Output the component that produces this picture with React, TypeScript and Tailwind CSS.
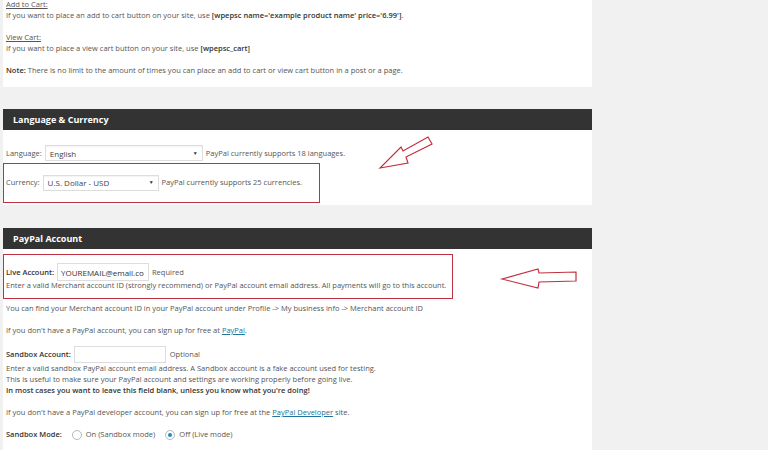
import React from "react";

const font = { fontFamily: '"Open Sans", "Noto Sans", sans-serif' };

function Header({ title }: { title: string }) {
  return (
    <div className="h-[21px] bg-[#333333] flex items-center pl-[10px]">
      <span className="text-white font-bold text-[9px]">{title}</span>
    </div>
  );
}

function Select({ value, width }: { value: string; width: string }) {
  return (
    <div
      className={`${width} h-[16px] border border-[#dddddd] bg-white flex items-center justify-between px-[4px] shadow-[inset_0_1px_1px_rgba(0,0,0,0.05)]`}
    >
      <span className="text-[8px] text-[#444]">{value}</span>
      <span className="text-[5px] text-[#333]">▼</span>
    </div>
  );
}

function Radio({ checked }: { checked?: boolean }) {
  return (
    <span className="w-[10px] h-[10px] rounded-full border border-[#b4b9be] bg-white flex items-center justify-center">
      {checked ? <span className="w-[4px] h-[4px] rounded-full bg-[#1e8cbe]" /> : null}
    </span>
  );
}

function ArrowOne() {
  return (
    <svg className="absolute left-[370px] top-[130px]" width="70" height="45" viewBox="370 130 70 45">
      <polygon
        points="380,168 408,163 406,157 432,144 428,137 403,151 401,147"
        fill="white"
        stroke="#c0303f"
        strokeWidth="1.2"
      />
    </svg>
  );
}

function ArrowTwo() {
  return (
    <svg className="absolute left-[495px] top-[262px]" width="90" height="32" viewBox="495 262 90 32">
      <polygon
        points="502,279 538,269 539,273 576,272 576,281 539,282 538,288"
        fill="white"
        stroke="#c0303f"
        strokeWidth="1.2"
      />
    </svg>
  );
}

export default function App() {
  return (
    <div
      className="relative w-[768px] h-[450px] overflow-hidden bg-[#f1f1f1] text-[7.5px] leading-[11px] text-[#555]"
      style={font}
    >
      <div className="ml-[3px] w-[589px] flex flex-col">
        {/* shortcode panel */}
        <div className="bg-white h-[87px] pl-[3px]">
          <div className="-mt-[1px]">
            <div className="underline">Add to Cart:</div>
            <div>
              If you want to place an add to cart button on your site, use{" "}
              <span className="font-semibold text-[#333]">[wpepsc name='example product name' price='6.99']</span>.
            </div>
            <div className="h-[11px]" />
            <div className="underline">View Cart:</div>
            <div>
              If you want to place a view cart button on your site, use{" "}
              <span className="font-semibold text-[#333]">[wpepsc_cart]</span>
            </div>
            <div className="h-[11px]" />
            <div>
              <span className="font-semibold text-[#333]">Note:</span> There is no limit to the amount of times you
              can place an add to cart or view cart button in a post or a page.
            </div>
          </div>
        </div>

        {/* language & currency */}
        <div className="mt-[22px]">
          <Header title="Language & Currency" />
          <div className="bg-white h-[75px] pt-[15px]">
            <div className="flex items-center gap-[3px] pl-[3px]">
              <span>Language:</span>
              <Select value="English" width="w-[158px]" />
              <span>PayPal currently supports 18 languages.</span>
            </div>
            <div className="mt-[2px] w-[317px] h-[40px] border-[1.5px] border-[#c0303f] flex items-center pl-[2px] gap-[3px] pb-[1px]">
              <span>Currency:</span>
              <Select value="U.S. Dollar - USD" width="w-[116px]" />
              <span>PayPal currently supports 25 currencies.</span>
            </div>
          </div>
        </div>

        {/* paypal account */}
        <div className="mt-[23px]">
          <Header title="PayPal Account" />
          <div className="bg-white h-[220px] pt-[5px]">
            <div className="w-[450px] h-[45px] border-[1.5px] border-[#c0303f] pl-[2px] pt-[8px]">
              <div className="flex items-center gap-[3px]">
                <span className="font-semibold text-[#333]">Live Account:</span>
                <div className="w-[92px] h-[18px] border border-[#dddddd] flex items-center px-[3px] text-[8px] text-[#333]">
                  YOUREMAIL@email.co
                </div>
                <span>Required</span>
              </div>
              <div className="-mt-[1px]">
                Enter a valid Merchant account ID (strongly recommend) or PayPal account email address. All payments
                will go to this account.
              </div>
            </div>
            <div className="pl-[3px] mt-[4px]">
              <div>
                You can find your Merchant account ID in your PayPal account under Profile -&gt; My business info
                -&gt; Merchant account ID
              </div>
              <div className="h-[11px]" />
              <div>
                If you don't have a PayPal account, you can sign up for free at{" "}
                <span className="underline text-[#21759b]">PayPal</span>.
              </div>
              <div className="flex items-center gap-[3px] mt-[10px]">
                <span className="font-semibold text-[#333]">Sandbox Account:</span>
                <div className="w-[92px] h-[17px] border border-[#dddddd]" />
                <span className="ml-[1px]">Optional</span>
              </div>
              <div>
                Enter a valid sandbox PayPal account email address. A Sandbox account is a fake account used for
                testing.
              </div>
              <div>
                This is useful to make sure your PayPal account and settings are working properly before going live.
              </div>
              <div className="font-semibold text-[#333]">
                In most cases you want to leave this field blank, unless you know what you're doing!
              </div>
              <div className="h-[11px]" />
              <div>
                If you don't have a PayPal developer account, you can sign up for free at the{" "}
                <span className="underline text-[#21759b]">PayPal Developer</span> site.
              </div>
              <div className="flex items-center mt-[11px]">
                <span className="font-semibold text-[#333] mr-[10px]">Sandbox Mode:</span>
                <Radio />
                <span className="ml-[4px] mr-[10px]">On (Sandbox mode)</span>
                <Radio checked />
                <span className="ml-[4px]">Off (Live mode)</span>
              </div>
            </div>
          </div>
        </div>
      </div>
      <ArrowOne />
      <ArrowTwo />
    </div>
  );
}
